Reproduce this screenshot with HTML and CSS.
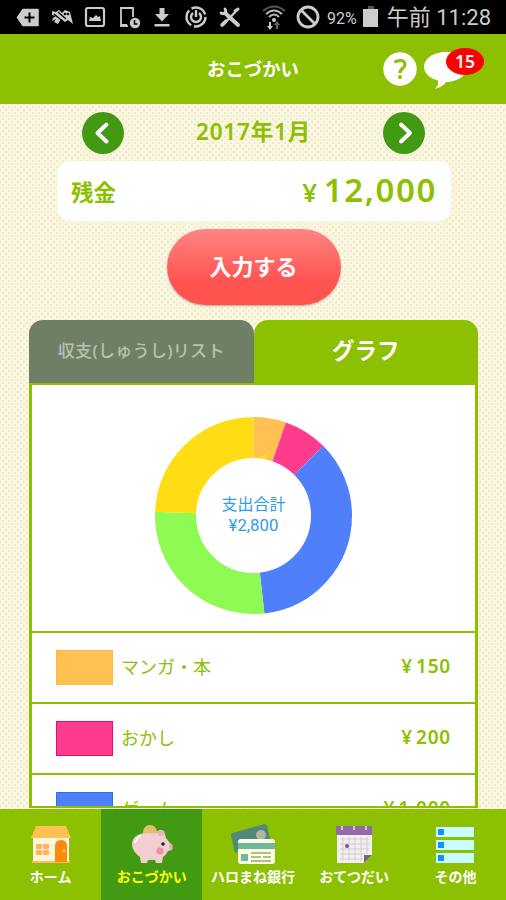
FILE: index.html
```html
<!DOCTYPE html>
<html lang="ja">
<head>
    <meta charset="UTF-8">
    <meta name="viewport" content="width=device-width, initial-scale=1.0">
    <title>おこづかい</title>
    <link rel="stylesheet" href="styles.css">
</head>
<body>

    <div class="status-bar">
        <div class="status-icons">
            <svg width="24" height="24" viewBox="0 0 24 24"><path fill="#ccc" stroke="#ccc" stroke-width="1.500" stroke-linejoin="round" d="M1.500 12.500L7 4.500H22V20.500H7z"/><path stroke="#000" stroke-width="2" d="M8.500 12.500h10M13.500 7.500v10"/></svg>
            <svg width="24" height="24" viewBox="0 0 24 24"><path fill="#ccc" d="M2 6l4 1 3-2 3 3 3-3 5 2 3 12-5-4-3 2-4-3-3 5-4-2 2-3-4 2 1-3 3-2-4-1z"/><path stroke="#000" stroke-width="1.3" d="M4 9l12 10M8 7l8 7"/><circle cx="15" cy="9" r="1.3"/><circle cx="18" cy="9" r="1.3"/></svg>
            <svg width="24" height="24" viewBox="0 0 24 24"><rect x="3" y="3" width="18" height="18" rx="2" fill="none" stroke="#ccc" stroke-width="2.2"/><path fill="#ccc" d="M6 16l1-4 3 1 3-3 2 2 2-1 1 5z"/></svg>
            <svg width="24" height="24" viewBox="0 0 24 24"><path fill="none" stroke="#ccc" stroke-width="1.8" d="M10 20H4V3h12v9"/><path stroke="#ccc" stroke-width="1.8" d="M3 21h8"/><circle cx="18" cy="18" r="5.2" fill="#ccc"/><path fill="none" stroke="#000" stroke-width="1.5" d="M17.5 15v4h3"/></svg>
            <svg width="24" height="24" viewBox="0 0 24 24"><path fill="#ccc" d="M9.500 3h5v6H19l-7 7.500L5 9h4.500zM4.500 19h15v2.500h-15z"/></svg>
            <svg width="24" height="24" viewBox="0 0 24 24"><g fill="none" stroke="#ccc"><circle cx="12" cy="12" r="9.500" stroke-width="2.400" stroke-dasharray="17 2.900"/><path stroke-width="2.400" d="M9 8a5 5 0 1 0 6 0M12 5v7"/></g></svg>
            <svg width="24" height="24" viewBox="0 0 24 24"><g fill="none" stroke="#ccc" stroke-linecap="round"><path stroke-width="2.500" d="M20 4L5 20"/><path stroke-width="4" d="M7 8l13 12"/><path stroke-width="2.800" d="M3 8c3 2 6-1 4-4M17 6l3-2"/><path stroke-width="3.500" d="M4 20l4-4"/></g></svg>
        </div>
        <div class="status-info">
            <svg width="24" height="26" viewBox="0 0 24 26"><g fill="none" stroke="#bbb" stroke-width="2"><path stroke="#555" d="M1 7Q12-2 23 7"/><path d="M4 10q8-7 16 0M7 13q5-5 10 0"/></g><circle cx="12" cy="16" r="2" fill="#ccc"/><path fill="#ccc" d="M7 18h2v4h2l-3 4-3-4h2z"/><path fill="#666" d="M14 25v-4h-2l3-4 3 4h-2v4z"/></svg>
            <svg width="24" height="24" viewBox="0 0 24 24"><g fill="none" stroke="#ccc" stroke-width="2.800"><circle cx="12" cy="12" r="10"/><path d="M5 5l14 14"/></g></svg>
            <span class="battery-text">92%</span>
            <svg width="15" height="22" viewBox="0 0 15 22"><path fill="#ccc" d="M0 3h15v18H0z"/><path fill="#555" d="M5 0h6v3H5z"/></svg>
            <span class="clock">午前 11:28</span>
        </div>
    </div>

    <header class="header">
        <h1>おこづかい</h1>
        <div class="header-buttons">
            <svg width="34" height="34" viewBox="0 0 34 34"><circle cx="17" cy="17" r="16.700" fill="#fff"/><path fill="none" stroke="#8cc000" stroke-width="3.200" d="M11.500 10.300Q14 8.500 17 8.500Q22 8.500 22 12.500Q22 14.700 19.500 16.600Q17 18.400 17 21"/><circle cx="17" cy="25" r="2" fill="#8cc000"/></svg>
            <div class="messages">
                <svg width="46" height="38" viewBox="0 0 46 38"><path fill="#fff" d="M21.500 0C33 0 43 6.500 43 15S33 30 22 30Q20 34 11 37Q15 33 14 28.500C6 26.500 0 21.500 0 15C0 6.500 10 0 21.500 0z"/></svg>
                <span class="badge">15</span>
            </div>
        </div>
    </header>

    <main class="content">
        <div class="month-nav">
            <button class="arrow"><svg width="42" height="42" viewBox="0 0 42 42"><path d="M24.500 12.500L15.500 21l9 8.500"/></svg></button>
            <span class="month">2017年1月</span>
            <button class="arrow"><svg width="42" height="42" viewBox="0 0 42 42"><path d="M18 12.500l9 8.500-9 8.500"/></svg></button>
        </div>

        <div class="balance">
            <span class="balance-label">残金</span>
            <span class="balance-amount"><span class="yen">¥</span>12,000</span>
        </div>

        <button class="input-button">入力する</button>

        <div class="tabs">
            <div class="tab">収支(しゅうし)リスト</div>
            <div class="tab active">グラフ</div>
        </div>

        <div class="panel">
            <div class="chart">
                <svg class="donut" viewBox="0 0 197 197">
                    <g fill="none" stroke-width="41" transform="rotate(-90 98.500 98.500)">
                        <circle cx="98.500" cy="98.500" r="78" stroke="#ffc252" pathLength="2800" stroke-dasharray="150 2650"/>
                        <circle cx="98.500" cy="98.500" r="78" stroke="#ff3c8c" pathLength="2800" stroke-dasharray="200 2600" stroke-dashoffset="-150"/>
                        <circle cx="98.500" cy="98.500" r="78" stroke="#507ffb" pathLength="2800" stroke-dasharray="1000 1800" stroke-dashoffset="-350"/>
                        <circle cx="98.500" cy="98.500" r="78" stroke="#90fa55" pathLength="2800" stroke-dasharray="768 2032" stroke-dashoffset="-1350"/>
                        <circle cx="98.500" cy="98.500" r="78" stroke="#ffdc14" pathLength="2800" stroke-dasharray="682 2118" stroke-dashoffset="-2118"/>
                    </g>
                </svg>
                <div class="chart-total">支出合計<br><span>¥2,800</span></div>
            </div>
            <div class="row">
                <span class="swatch manga"></span>
                <span class="name">マンガ・本</span>
                <span class="price"><span class="yen">¥</span>150</span>
            </div>
            <div class="row">
                <span class="swatch snack"></span>
                <span class="name">おかし</span>
                <span class="price"><span class="yen">¥</span>200</span>
            </div>
            <div class="row">
                <span class="swatch game"></span>
                <span class="name">ゲーム</span>
                <span class="price"><span class="yen">¥</span>1,000</span>
            </div>
        </div>
    </main>

    <nav class="bottom-nav">
        <div class="nav-item">
            <svg width="42" height="42" viewBox="0 0 42 42"><path fill="#fff5dc" d="M3 12h36v26H3z"/><path fill="#ffc252" d="M6 2h30l5 12H1z"/><path fill="#ffb96a" d="M2 37h38v2H2z"/><path fill="#ff8908" d="M25 38V22q0-6 6-6t6 6v16z"/><g fill="#ffb45c"><rect x="6" y="20" width="6" height="5" rx="1"/><rect x="13" y="20" width="6" height="5" rx="1"/><rect x="6" y="26" width="6" height="5" rx="1"/><rect x="13" y="26" width="6" height="5" rx="1"/></g><circle cx="34" cy="27" r="1.200" fill="#ffe3a0"/></svg>
            <span>ホーム</span>
        </div>
        <div class="nav-item active">
            <svg width="42" height="42" viewBox="0 0 42 42"><circle cx="19" cy="8" r="7" fill="#dfc06b"/><path fill="#f2ced0" d="M17 9Q22 10 26 9L28 6l5 1 2 7 4 5 2 2v5l-4 1q-2 4-5 6l-1 6h-6l-1-3h-7l-1 3h-6l-1-6C4 29 1 25 1 20C1 12 9 9 17 9z"/><path fill="#eeb0b5" d="M26 7l6-1 1 5-5 1z"/><path fill="none" stroke="#fff4f4" stroke-width="2" stroke-linecap="round" d="M4 18q2-4 5-6"/><circle cx="32" cy="20" r="1.800" fill="#222"/><circle cx="29" cy="27" r="3.600" fill="#f08ea2"/><ellipse cx="40" cy="23" rx="1.700" ry="3.200" fill="#f3aaa8"/></svg>
            <span>おこづかい</span>
        </div>
        <div class="nav-item">
            <svg width="46" height="42" viewBox="0 0 46 42"><path fill="#52877a" d="M1 11q0-2 2-2L34 0q2 0 3 2l3 13-35 14z"/><circle cx="31" cy="11" r="5" fill="#b0b5a4"/><rect x="8" y="15" width="37" height="25" rx="3" fill="#f8ffe3"/><path fill="#6db99d" d="M8 19h37v6H8zM11 30h7v7h-7z"/><path stroke="#a6a177" stroke-width="1.700" d="M21 29h20M21 33h10M33 33h8M21 37h20"/></svg>
            <span>ハロまね銀行</span>
        </div>
        <div class="nav-item">
            <svg width="38" height="42" viewBox="0 0 38 42"><path fill="#f2eef1" d="M2 2h35v29l-8 8H2z"/><path fill="#9269a9" d="M1 2h36v9H1z"/><path stroke="#d3cdd4" d="M5 15h29M5 20h29M5 25h29M5 30h25M5 35h23M8 13v24M14 13v24M20 13v24M26 13v24M32 13v17"/><path fill="#71667a" d="M29 39v-8h8z"/><path stroke="#ddc7b5" stroke-width="2" d="M7 2v4M19 2v4M31 2v4"/><circle cx="12" cy="22" r="2" fill="#765693"/></svg>
            <span>おてつだい</span>
        </div>
        <div class="nav-item">
            <svg width="38" height="42" viewBox="0 0 38 42"><path fill="#c8ffff" d="M0 3h38v10H0zM0 16h38v10H0zM0 29h38v10H0z"/><path fill="#168eff" d="M2 5h6v6H2zM2 18h6v6H2zM2 31h6v6H2z"/></svg>
            <span>その他</span>
        </div>
    </nav>

</body>
</html>
```
FILE: styles.css
```css
* {
    box-sizing: border-box;
}

body {
    margin: 0;
    height: 900px;
    display: flex;
    flex-direction: column;
    overflow: hidden;
    font-family: "Noto Sans", "Noto Sans CJK JP", sans-serif;
    color: #8cc000;
}

button {
    border: none;
    padding: 0;
    font-family: inherit;
}

svg {
    display: block;
    flex: none;
}

.status-bar {
    height: 34px;
    flex: none;
    padding: 0 15px 0 16px;
    display: flex;
    align-items: center;
    justify-content: space-between;
    background: #000;
    color: #ccc;
    font-family: Roboto, "Noto Sans CJK JP", sans-serif;
    white-space: nowrap;
}

.status-icons {
    display: flex;
    gap: 9.6px;
}

.status-info {
    display: flex;
    align-items: center;
}

.status-info svg + svg {
    margin-left: 10px;
}

.battery-text {
    margin: 2px 6px 0 7px;
    font-size: 16px;
}

.clock {
    margin-left: 9px;
    padding-top: 2px;
    font-size: 22px;
    line-height: 30px;
}

.header {
    height: 70px;
    flex: none;
    display: grid;
    grid-template-columns: 1fr auto 1fr;
    align-items: center;
    background: #8cc000;
    color: #fff;
}

.header h1 {
    grid-column: 2;
    margin: 0;
    font-size: 18.4px;
    line-height: 28px;
}

.header-buttons {
    grid-column: 3;
    display: flex;
    justify-content: flex-end;
    align-items: center;
    padding-right: 36px;
    gap: 7px;
}

.messages {
    position: relative;
    margin-top: 4px;
}

.badge {
    position: absolute;
    left: 22px;
    top: -4px;
    width: 38px;
    height: 27px;
    border-radius: 50%;
    background: #f00;
    font-size: 17.5px;
    font-weight: 600;
    line-height: 27px;
    text-align: center;
}

.content {
    flex: 1;
    min-height: 0;
    padding: 7px 28px 0 29px;
    display: flex;
    flex-direction: column;
    background-color: #faf6e0;
    background-image: radial-gradient(circle, #f0eacd 1px, transparent 1.3px), radial-gradient(circle, #f0eacd 1px, transparent 1.3px);
    background-size: 6px 6px;
    background-position: 0 0, 3px 3px;
}

.month-nav {
    height: 43px;
    margin: 0 25px 0 53px;
    padding-right: 28px;
    display: flex;
    align-items: center;
    justify-content: space-between;
}

.month {
    padding-bottom: 4px;
    font-size: 22.5px;
    font-weight: 600;
    letter-spacing: 0.8px;
}

.arrow {
    width: 42px;
    height: 42px;
    border-radius: 50%;
    background: #429912;
}

.arrow path {
    fill: none;
    stroke: #fff;
    stroke-width: 4;
    stroke-linecap: round;
    stroke-linejoin: round;
}

.balance {
    height: 60px;
    flex: none;
    margin: 7px 27px 8px 28px;
    padding: 0 14px 0 14px;
    display: flex;
    align-items: center;
    justify-content: space-between;
    background: #fff;
    border-radius: 14px;
    font-weight: bold;
}

.balance-label {
    font-size: 22.5px;
}

.balance-amount {
    font-size: 33px;
    font-weight: 600;
    line-height: 60px;
    letter-spacing: 1.6px;
}

.balance-amount .yen {
    font-size: 26px;
    margin-right: 5px;
}

.input-button {
    width: 174px;
    height: 76px;
    flex: none;
    align-self: center;
    padding-bottom: 5px;
    border-radius: 38px;
    background: linear-gradient(#ff8582, #ff5350 70%);
    box-shadow: 0 1px 2px rgba(0, 0, 0, 0.3);
    color: #fff;
    font-size: 22px;
    font-weight: bold;
}

.tabs {
    display: flex;
    flex: none;
    margin-top: 15px;
    height: 63px;
}

.tab {
    flex: 1;
    border-radius: 14px 14px 0 0;
    background: #6e7f65;
    color: #b6c2b2;
    font-size: 17px;
    font-weight: 500;
    letter-spacing: 0.3px;
    line-height: 62px;
    text-align: center;
}

.tab.active {
    background: #8cc000;
    color: #fff;
    font-size: 22.5px;
    font-weight: bold;
    letter-spacing: 0;
}

.panel {
    height: 425px;
    overflow: hidden;
    border: 2px solid #8cc000;
    border-left-width: 3px;
    border-right-width: 3px;
    background: #fff;
}

.chart {
    height: 246px;
    display: grid;
    place-items: center;
    padding-top: 14px;
}

.donut,
.chart-total {
    grid-area: 1 / 1;
}

.donut {
    width: 197px;
    height: 197px;
}

.chart-total {
    font-family: Roboto, "Noto Sans CJK JP", sans-serif;
    font-size: 16px;
    line-height: 20px;
    text-align: center;
    color: #329bef;
}

.chart-total span {
    font-size: 16.8px;
}

.row {
    height: 71px;
    padding: 0 24px;
    border-top: 2px solid #8cc000;
    display: flex;
    align-items: center;
}

.swatch {
    width: 57px;
    height: 35px;
    border: 1px solid;
}

.manga {
    background: #ffc252;
    border-color: #ffb83b;
}

.snack {
    background: #ff3c8c;
    border-color: #ed0875;
}

.game {
    background: #507ffb;
    border-color: #3569f2;
}

.name {
    margin-left: 8px;
    padding-bottom: 3px;
    font-size: 18px;
}

.price {
    margin-left: auto;
    padding-bottom: 3px;
    font-size: 19px;
    font-weight: 600;
    letter-spacing: 0.8px;
}

.price .yen {
    margin-right: 3px;
}

.bottom-nav {
    height: 91px;
    flex: none;
    display: flex;
    background: #8cc000;
    color: #fff;
    font-size: 14px;
    font-weight: bold;
    white-space: nowrap;
}

.nav-item {
    flex: 1 1 0;
    min-width: 0;
    padding-top: 15px;
    display: flex;
    flex-direction: column;
    align-items: center;
}

.nav-item span {
    line-height: 22px;
}

.nav-item.active {
    background: #429912;
    color: #ffff00;
}
```
